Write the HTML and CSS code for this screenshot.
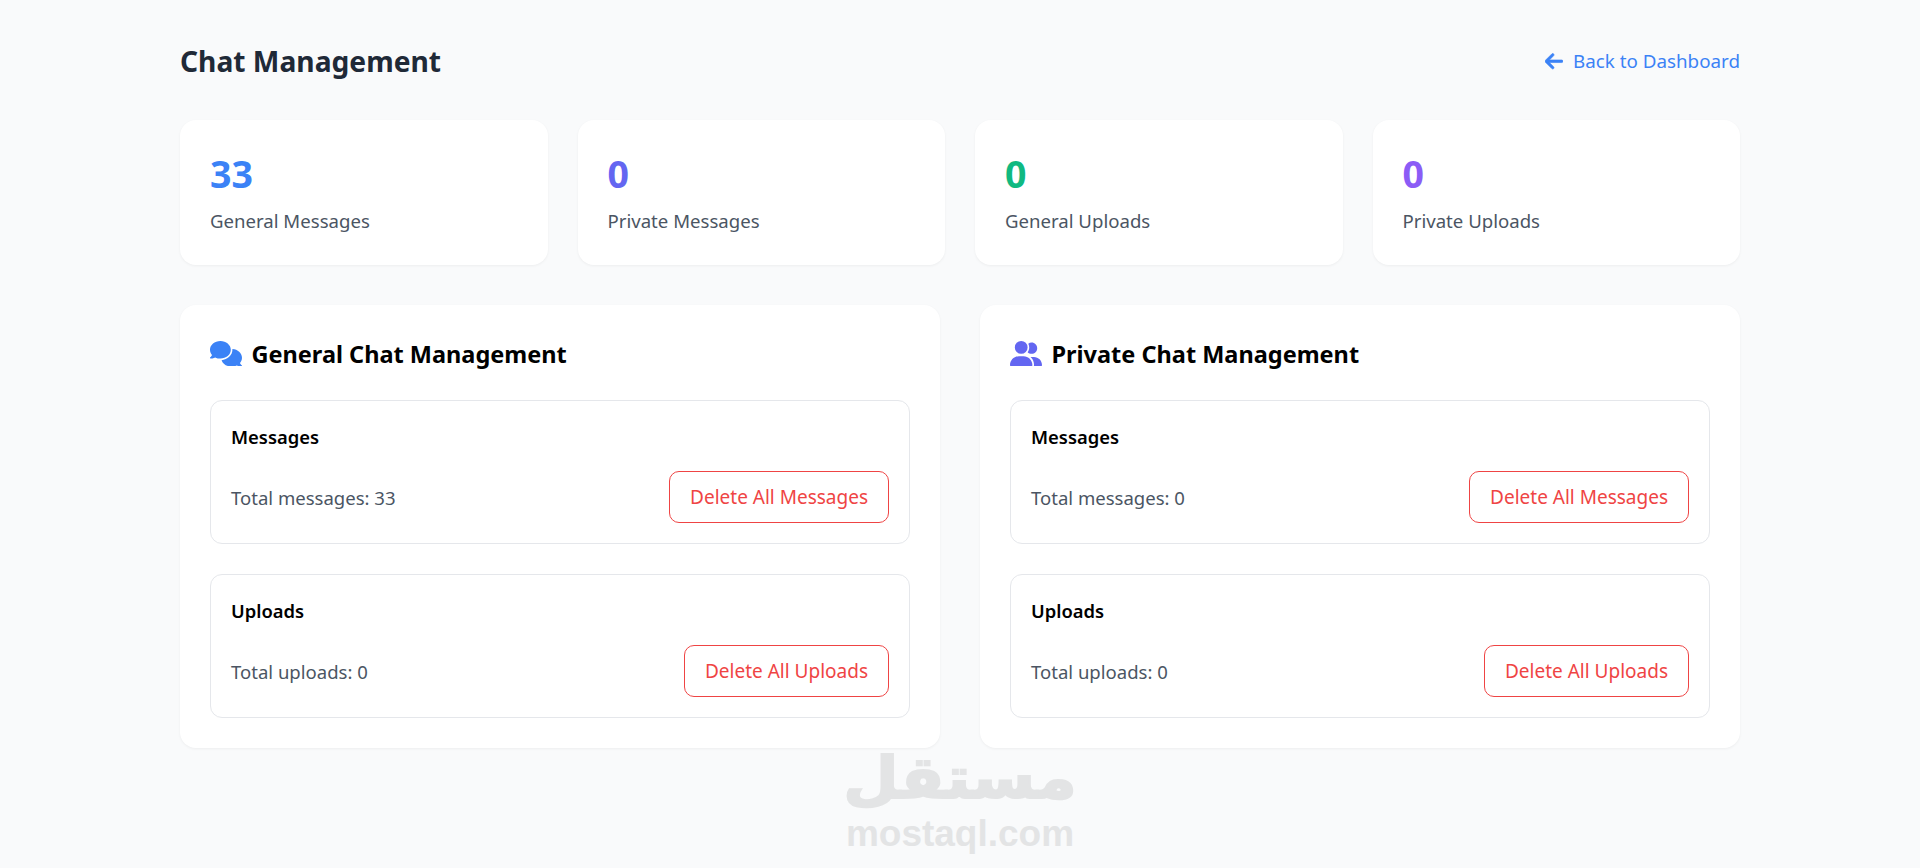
FILE: index.html
```html
<!DOCTYPE html>
<html lang="en">
<head>
<meta charset="utf-8">
<title>Chat Management</title>
<link rel="stylesheet" href="styles.css">
</head>
<body>
<main class="page">
  <header class="top">
    <h1 class="title">Chat Management</h1>
    <a class="back" href="#"><svg class="back-icon" viewBox="0 0 448 512"><path d="M9.4 233.4c-12.5 12.5-12.5 32.8 0 45.3l160 160c12.5 12.5 32.8 12.5 45.3 0s12.5-32.8 0-45.3L109.2 288 416 288c17.7 0 32-14.3 32-32s-14.3-32-32-32l-306.7 0L214.6 118.6c12.5-12.5 12.5-32.8 0-45.3s-32.8-12.5-45.3 0l-160 160z"/></svg>Back to Dashboard</a>
  </header>
  <section class="stats">
    <div class="stat"><div class="num blue">33</div><div class="label">General Messages</div></div>
    <div class="stat"><div class="num indigo">0</div><div class="label">Private Messages</div></div>
    <div class="stat"><div class="num green">0</div><div class="label">General Uploads</div></div>
    <div class="stat"><div class="num purple">0</div><div class="label">Private Uploads</div></div>
  </section>
  <section class="panels">
    <div class="panel">
      <h2 class="panel-title"><svg class="ic blue" viewBox="0 0 640 512"><path d="M208 352c114.9 0 208-78.8 208-176S322.9 0 208 0S0 78.8 0 176c0 38.6 14.7 74.3 39.6 103.4c-3.5 9.4-8.7 17.7-14.2 24.7c-4.8 6.2-9.7 11-13.3 14.3c-1.8 1.6-3.3 2.9-4.3 3.7c-.5 .4-.9 .7-1.1 .8l-.2 .2 0 0 0 0C1 327.2-1.4 334.4 .8 340.9S9.1 352 16 352c21.8 0 43.8-5.6 62.1-12.5c9.2-3.5 17.8-7.4 25.3-11.4C134.1 343.3 169.8 352 208 352zM448 176c0 112.3-99.1 196.9-216.5 207C255.8 457.4 336.4 512 432 512c38.2 0 73.9-8.7 104.7-23.9c7.5 4 16 7.9 25.2 11.4c18.3 6.9 40.3 12.5 62.1 12.5c6.9 0 13.1-4.5 15.2-11.1c2.1-6.6-.2-13.8-5.8-17.9l0 0 0 0-.2-.2c-.2-.2-.6-.4-1.1-.8c-1-.8-2.5-2-4.3-3.7c-3.6-3.3-8.5-8.1-13.3-14.3c-5.5-7-10.7-15.4-14.2-24.7c24.9-29 39.6-64.7 39.6-103.4c0-92.8-84.9-168.9-192.6-175.5c.4 5.1 .6 10.3 .6 15.5z"/></svg>General Chat Management</h2>
      <div class="box">
        <h3 class="box-title">Messages</h3>
        <div class="row"><span class="total">Total messages: 33</span><button class="del">Delete All Messages</button></div>
      </div>
      <div class="box">
        <h3 class="box-title">Uploads</h3>
        <div class="row"><span class="total">Total uploads: 0</span><button class="del">Delete All Uploads</button></div>
      </div>
    </div>
    <div class="panel">
      <h2 class="panel-title"><svg class="ic indigo" viewBox="0 0 640 512"><path d="M96 128a128 128 0 1 1 256 0A128 128 0 1 1 96 128zM0 482.3C0 383.8 79.8 304 178.3 304h91.4C368.2 304 448 383.8 448 482.3c0 16.4-13.3 29.7-29.7 29.7H29.7C13.3 512 0 498.7 0 482.3zm609.3 29.7H471.4c5.4-9.4 8.6-20.3 8.6-32v-8c0-60.7-27.1-115.2-69.8-151.8c2.4-.1 4.7-.2 7.1-.2h61.4C567.8 320 640 392.2 640 481.3c0 17-13.8 30.7-30.7 30.7zM432 256c-31 0-59-12.6-79.3-32.9C372.4 196.5 384 163.6 384 128c0-26.8-6.6-52.1-18.3-74.3C384.3 40.1 407.2 32 432 32c61.9 0 112 50.1 112 112s-50.1 112-112 112z"/></svg>Private Chat Management</h2>
      <div class="box">
        <h3 class="box-title">Messages</h3>
        <div class="row"><span class="total">Total messages: 0</span><button class="del">Delete All Messages</button></div>
      </div>
      <div class="box">
        <h3 class="box-title">Uploads</h3>
        <div class="row"><span class="total">Total uploads: 0</span><button class="del">Delete All Uploads</button></div>
      </div>
    </div>
  </section>
</main>
<div class="mark"><div class="mark-ar">مستقل</div><div class="mark-en">mostaql.com</div></div>
</body>
</html>
```
FILE: styles.css
```css
* { box-sizing: border-box; }
html, body { margin: 0; height: 868px; overflow: hidden; }
body { background: #f9fafb; font-family: "Noto Sans", "Open Sans", sans-serif; color: #000; }
.page { width: 1560px; margin: 0 auto; padding-top: 40px; }
.top { display: flex; justify-content: space-between; align-items: center; height: 42px; margin-bottom: 38px; }
.title { margin: 0; font-size: 28.2px; font-weight: 700; color: #1f2937; }
.back { display: flex; align-items: center; gap: 10px; color: #3b82f6; text-decoration: none; font-size: 18.8px; }
.back-icon { width: 18px; height: 20.5px; fill: currentColor; stroke: currentColor; stroke-width: 16; }
.stats { display: grid; grid-template-columns: repeat(4, 1fr); gap: 30px; margin-bottom: 40px; }
.stat { background: #fff; border-radius: 16px; padding: 30px; height: 145px; box-shadow: 0 1px 3px rgba(0,0,0,.05); }
.num { font-size: 37.5px; font-weight: 700; line-height: 48px; }
.label { margin-top: 10px; font-size: 18.6px; color: #4b5563; }
.blue { color: #3b82f6; fill: #3b82f6; }
.indigo { color: #6366f1; fill: #6366f1; }
.green { color: #10b981; }
.purple { color: #8b5cf6; }
.panels { display: grid; grid-template-columns: 760px 760px; gap: 40px; }
.panel { background: #fff; border-radius: 16px; padding: 30px; height: 443px; box-shadow: 0 1px 3px rgba(0,0,0,.05); }
.panel-title { display: flex; align-items: center; gap: 9.5px; margin: 0 0 28px; height: 37px; font-size: 23.5px; font-weight: 700; }
.ic { width: 32px; height: 25.6px; }
.box { border: 1px solid #e5e7eb; border-radius: 12px; height: 144px; padding: 23px 20px 20px; margin-bottom: 30px; }
.box:last-child { margin-bottom: 0; }
.box-title { margin: 0 0 21px; font-size: 18.4px; font-weight: 600; line-height: 26px; }
.row { display: flex; justify-content: space-between; align-items: center; }
.total { font-size: 18.55px; color: #4b5563; }
.del { height: 52px; padding: 0 20px; background: #fff; border: 1px solid #ef4444; border-radius: 10px; color: #ef4444; font: inherit; font-size: 19px; }
.mark { position: absolute; left: 845px; top: 742px; width: 230px; text-align: center; color: #e3e4e5; }
.mark-ar { font-family: "DejaVu Sans", sans-serif; font-weight: 700; font-size: 58px; line-height: 72px; -webkit-text-stroke: 2px #e3e4e5; transform: scaleX(1.1); }
.mark-en { font-family: "Liberation Sans", sans-serif; font-weight: 700; font-size: 37px; line-height: 40px; }
```
